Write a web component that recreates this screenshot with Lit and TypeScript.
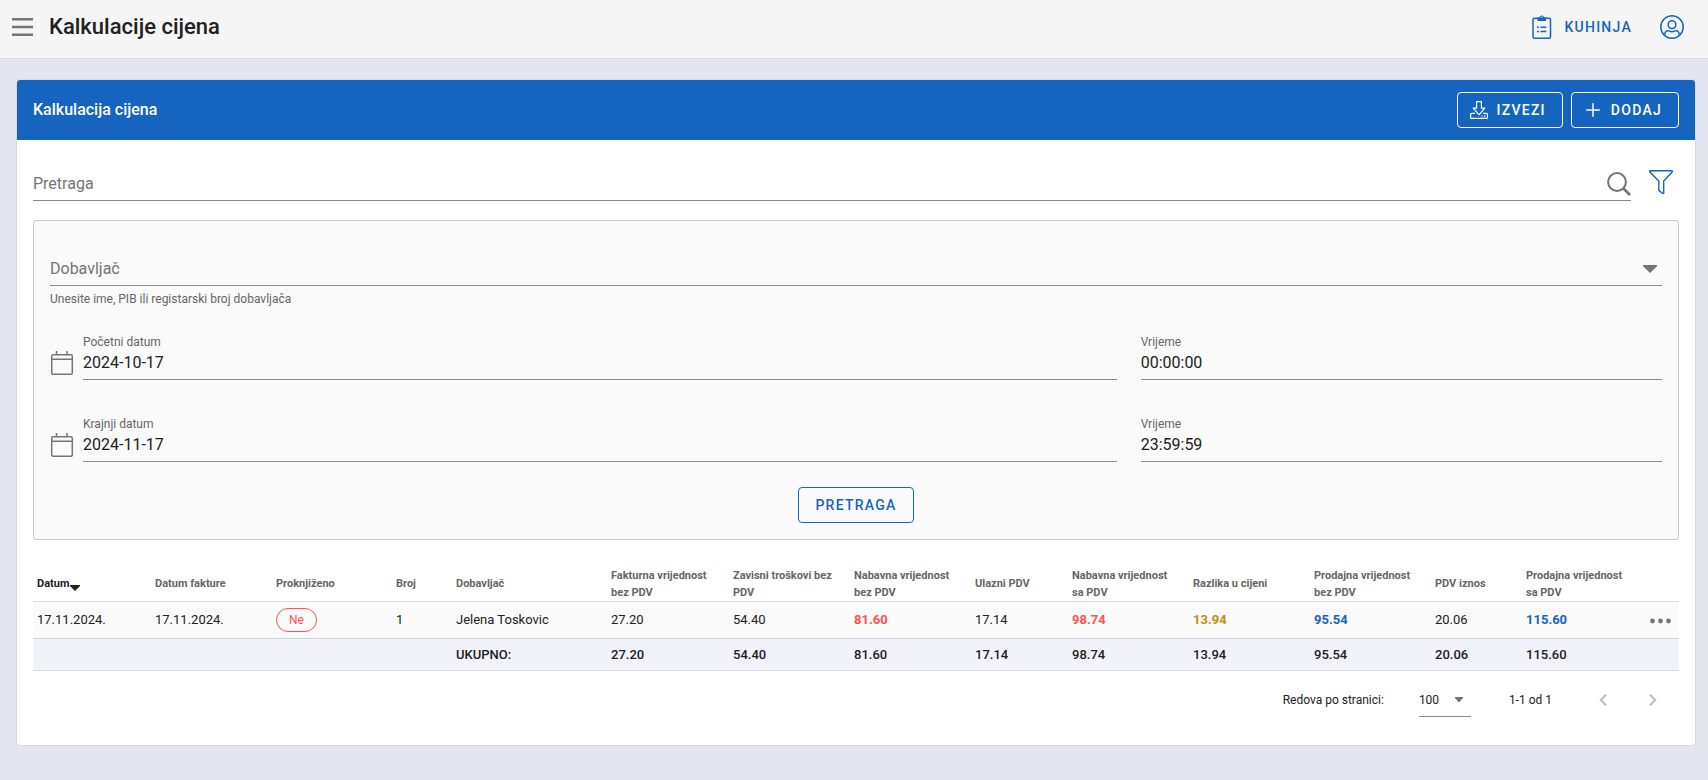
import { LitElement, html, css, svg, nothing } from "lit";
import { customElement, state } from "lit/decorators.js";

type Tone = "plain" | "cost" | "margin" | "sale";

interface Column {
  key: string;
  label: string;
  width: number;
  tone?: Tone;
}

const columns: Column[] = [
  { key: "date", label: "Datum", width: 118 },
  { key: "invoiceDate", label: "Datum fakture", width: 121 },
  { key: "posted", label: "Proknjiženo", width: 120 },
  { key: "number", label: "Broj", width: 60 },
  { key: "supplier", label: "Dobavljač", width: 155 },
  { key: "invoiceNet", label: "Fakturna vrijednost bez PDV", width: 122 },
  { key: "extraNet", label: "Zavisni troškovi bez PDV", width: 121 },
  { key: "costNet", label: "Nabavna vrijednost bez PDV", width: 121, tone: "cost" },
  { key: "inputVat", label: "Ulazni PDV", width: 97 },
  { key: "costGross", label: "Nabavna vrijednost sa PDV", width: 121, tone: "cost" },
  { key: "margin", label: "Razlika u cijeni", width: 121, tone: "margin" },
  { key: "saleNet", label: "Prodajna vrijednost bez PDV", width: 121, tone: "sale" },
  { key: "vat", label: "PDV iznos", width: 91 },
  { key: "saleGross", label: "Prodajna vrijednost sa PDV", width: 124, tone: "sale" },
  { key: "menu", label: "", width: 33 },
];

const totalWidth = columns.reduce((sum, c) => sum + c.width, 0);

const amounts = {
  invoiceNet: "27.20",
  extraNet: "54.40",
  costNet: "81.60",
  inputVat: "17.14",
  costGross: "98.74",
  margin: "13.94",
  saleNet: "95.54",
  vat: "20.06",
  saleGross: "115.60",
};

const rows: Record<string, string>[] = [
  { date: "17.11.2024.", invoiceDate: "17.11.2024.", posted: "Ne", number: "1", supplier: "Jelena Toskovic", ...amounts },
];

const totals: Record<string, string> = { supplier: "UKUPNO:", ...amounts };

const icon = (size: number, body: unknown, width = size) =>
  html`<svg class="icon" width=${width} height=${size} viewBox="0 0 ${width} ${size}" aria-hidden="true">${body}</svg>`;

const menuIcon = icon(18, svg`<path fill="currentColor" d="M0 0h21v2.500H0zM0 7.700h21v2.500H0zM0 15.400h21v2.500H0z"/>`, 21);

const clipboardIcon = icon(24, svg`
  <g fill="none" stroke="currentColor" stroke-width="1.500">
    <rect x="1" y="3.200" width="17.500" height="20" rx="1.500"/>
    <path d="M8.500 12.300h5.800M8.500 16.500h5.800"/>
  </g>
  <circle cx="5.900" cy="12.300" r="1" fill="currentColor"/>
  <circle cx="5.900" cy="16.500" r="1" fill="currentColor"/>
  <path fill="currentColor" fill-rule="evenodd" d="M5.300 2.500h2.100a2.400 2.400 0 0 1 4.700 0h2.100v2.300a1.200 1.200 0 0 1-1.200 1.200H6.500a1.200 1.200 0 0 1-1.200-1.200zM9.750 1.400a1.100 1.100 0 1 0 0 2.200 1.100 1.100 0 0 0 0-2.200z"/>`, 20);

const accountIcon = icon(24, svg`
  <g fill="none" stroke="currentColor" stroke-width="1.500">
    <circle cx="12" cy="12" r="11.200"/>
    <circle cx="12" cy="9.600" r="3.900"/>
    <path d="M4.800 20.400v-1.200a3.400 3.400 0 0 1 3.400-3.400c1.200 0 1.800.9 3.800.9s2.600-.9 3.800-.9a3.400 3.400 0 0 1 3.400 3.400v1.200"/>
  </g>`);

const exportIcon = icon(18, svg`
  <g fill="none" stroke="currentColor" stroke-width="1.200" stroke-linejoin="round">
    <path d="M6.600.6h4.800v6.600h3.400L9 13.800 3.200 7.200h3.400z"/>
    <path d="M5 12.400H1.600a1 1 0 0 0-1 1v3a1 1 0 0 0 1 1h14.800a1 1 0 0 0 1-1v-3a1 1 0 0 0-1-1H13"/>
    <path d="M11.500 15.100h1.200M14 15.100h1.500"/>
  </g>`);

const plusIcon = icon(18, svg`<path fill="none" stroke="currentColor" stroke-width="1.500" d="M9 2.300v13.400M2.300 9h13.400"/>`);

const searchIcon = icon(24, svg`
  <g fill="none" stroke="currentColor">
    <circle cx="10" cy="10" r="8.900" stroke-width="2"/>
    <path stroke-width="2.600" d="m16.500 16.500 6.500 6.500"/>
  </g>`);

const filterIcon = icon(24, svg`
  <path fill="none" stroke="currentColor" stroke-width="1.400" stroke-linejoin="round" d="M.8.8h22.400v1.100l-8.500 9v12.300h-1.300l-3.600-2.800v-9.500l-9-9z"/>`);

const calendarIcon = icon(24, svg`
  <g fill="none" stroke="currentColor" stroke-width="1.500">
    <rect x="1.700" y="3.700" width="20.600" height="19.600" rx="1.500"/>
    <path d="M1.700 8.300h20.600M6.500 0v3.700M17 0v3.700"/>
  </g>`);

const caretIcon = icon(8, svg`<path fill="currentColor" d="M0 0h14v1.200L7 8 0 1.200z"/>`, 14);

const smallCaretIcon = icon(6, svg`<path fill="currentColor" d="M0 0h8v1L4 5.500 0 1z"/>`, 8);

const sortIcon = icon(6, svg`<path fill="currentColor" d="M0 0h10v1L5 6 0 1z"/>`, 10);

const previousIcon = icon(12, svg`<path fill="none" stroke="currentColor" stroke-width="2" d="M7 .7 1.700 6 7 11.300"/>`, 8);

const nextIcon = icon(12, svg`<path fill="none" stroke="currentColor" stroke-width="2" d="M1 .7 6.300 6 1 11.300"/>`, 8);

const dotsIcon = icon(6, svg`
  <g fill="currentColor"><circle cx="2.500" cy="3" r="2.400"/><circle cx="10.500" cy="3" r="2.400"/><circle cx="18.500" cy="3" r="2.400"/></g>`, 21);

@customElement("app-root")
export class AppRoot extends LitElement {
  @state() private filtersOpen = true;

  static styles = css`
    :host {
      display: block;
      min-height: 100vh;
      background: #e3e6ee;
      color: #212121;
      font-family: Roboto, "Liberation Sans", sans-serif;
      font-size: 16px;
      line-height: 24px;
    }
    * {
      box-sizing: border-box;
    }
    .icon {
      display: block;
      flex: none;
    }
    button,
    input,
    select {
      margin: 0;
      padding: 0;
      border: 0;
      border-radius: 0;
      background: none;
      color: inherit;
      font: inherit;
      outline: none;
      appearance: none;
    }
    button {
      cursor: pointer;
    }
    h1,
    h2 {
      margin: 0;
      font-weight: 500;
    }
    .topbar {
      display: flex;
      align-items: center;
      height: 59px;
      padding: 0 24px 4px 12px;
      border-bottom: 1px solid #d6d8e4;
      background: #f5f5f5;
    }
    .topbar h1 {
      flex: 1;
      margin-left: 16px;
      font-size: 22px;
    }
    .muted {
      color: #757575;
    }
    .link {
      display: flex;
      align-items: center;
      gap: 12px;
      margin-right: 28px;
      color: #1565c0;
      text-decoration: none;
    }
    .caps {
      font-size: 14px;
      font-weight: 500;
      letter-spacing: 0.09em;
      text-transform: uppercase;
    }
    .blue {
      color: #1565c0;
    }
    .card {
      margin: 20px 12px 0 16px;
      border: 1px solid #d6d8e4;
      border-radius: 4px;
      background: #fff;
      overflow: hidden;
    }
    .card-head {
      display: flex;
      align-items: center;
      gap: 8px;
      height: 60px;
      padding: 0 16px;
      background: #1565c0;
      color: #fff;
    }
    .card-head h2 {
      flex: 1;
      font-size: 16px;
    }
    .button {
      display: flex;
      align-items: center;
      gap: 9px;
      height: 36px;
      padding: 0 16px 0 12px;
      border: 1px solid currentColor;
      border-radius: 4px;
    }
    .card-body {
      padding: 28px 16px 16px;
    }
    .search {
      display: flex;
      align-items: flex-start;
      gap: 18px;
      padding-right: 6px;
    }
    .filter-toggle {
      padding: 2px 0;
    }
    .line {
      display: flex;
      align-items: center;
      border-bottom: 1px solid #8d8d8d;
    }
    .line input,
    .line select {
      flex: 1;
      min-width: 0;
      width: 100%;
    }
    .line input::placeholder {
      color: #757575;
      opacity: 1;
    }
    .search .line {
      flex: 1;
      height: 33px;
    }
    .filters {
      margin-top: 19px;
      padding: 32px 16px 16px;
      border: 1px solid #c9c9c9;
      border-radius: 3px;
      background: #fafafa;
    }
    .supplier {
      height: 33px;
      padding-right: 5px;
    }
    .hint {
      margin-top: 4px;
      font-size: 12px;
      line-height: 18px;
      color: #666;
    }
    .period {
      display: grid;
      grid-template-columns: repeat(12, 1fr);
      gap: 24px;
      margin-top: 26px;
    }
    .period + .period {
      margin-top: 36px;
    }
    .date {
      grid-column: span 8;
      display: flex;
      align-items: center;
      gap: 9px;
    }
    .time {
      grid-column: span 4;
    }
    .date .icon {
      margin-top: 12px;
    }
    .field {
      flex: 1;
      min-width: 0;
    }
    .field label {
      display: block;
      font-size: 12px;
      line-height: 16px;
      color: #666;
    }
    .field .line {
      height: 30px;
      padding-bottom: 3px;
    }
    .submit {
      margin: 25px auto 0;
      padding: 0 16px;
    }
    table {
      width: 100%;
      margin-top: 26px;
      border-collapse: separate;
      border-spacing: 0;
      table-layout: fixed;
      font-size: 13px;
      text-align: left;
    }
    th,
    td {
      padding: 0 4px;
      border-bottom: 1px solid #dcdcdf;
    }
    th {
      height: 36px;
      padding-right: 12px;
      color: #666;
      font-size: 11px;
      font-weight: 700;
      line-height: 17px;
    }
    .sort {
      display: flex;
      align-items: center;
      gap: 1px;
      color: #212121;
    }
    .sort .icon {
      margin-top: 8px;
    }
    tbody td {
      height: 37px;
      border-bottom-color: #d0d0d6;
      background: #fafafa;
    }
    tfoot td {
      height: 32px;
      background: #f2f2fb;
      font-weight: 500;
    }
    .cost,
    .margin,
    .sale {
      font-weight: 700;
    }
    .cost {
      color: #ff5252;
    }
    .margin {
      color: #c09010;
    }
    .sale {
      color: #1565c0;
    }
    .chip {
      display: inline-block;
      padding: 0 12px;
      border: 1px solid #ff5252;
      border-radius: 12px;
      color: #ff5252;
      font-size: 12px;
      line-height: 22px;
    }
    .pager {
      display: flex;
      align-items: center;
      justify-content: flex-end;
      height: 58px;
      padding-right: 22px;
      font-size: 12px;
    }
    .page-size {
      width: 52px;
      height: 34px;
      margin: 0 38px 0 35px;
      padding-right: 8px;
    }
    .pages {
      display: flex;
      gap: 42px;
      margin-left: 47px;
      color: #bdbdbd;
    }
  `;

  private periodRow(id: string, label: string, date: string, time: string) {
    return html`
      <div class="period">
        <div class="date">
          <span class="muted">${calendarIcon}</span>
          <div class="field">
            <label for="${id}-date">${label}</label>
            <div class="line"><input id="${id}-date" type="text" .value=${date} /></div>
          </div>
        </div>
        <div class="field time">
          <label for="${id}-time">Vrijeme</label>
          <div class="line"><input id="${id}-time" type="text" .value=${time} /></div>
        </div>
      </div>
    `;
  }

  private cell(column: Column, row: Record<string, string>) {
    if (column.key === "menu") {
      return html`<td><button class="muted" aria-label="Opcije">${dotsIcon}</button></td>`;
    }
    if (column.key === "posted") {
      return html`<td><span class="chip">${row.posted}</span></td>`;
    }
    return html`<td class=${column.tone ?? "plain"}>${row[column.key]}</td>`;
  }

  private filters() {
    return html`
      <form class="filters" @submit=${(e: Event) => e.preventDefault()}>
        <div class="line supplier muted">
          <select aria-label="Dobavljač" aria-describedby="supplier-hint">
            <option value="">Dobavljač</option>
          </select>
          ${caretIcon}
        </div>
        <div class="hint" id="supplier-hint">Unesite ime, PIB ili registarski broj dobavljača</div>
        ${this.periodRow("start", "Početni datum", "2024-10-17", "00:00:00")}
        ${this.periodRow("end", "Krajnji datum", "2024-11-17", "23:59:59")}
        <button class="button submit caps blue" type="submit">Pretraga</button>
      </form>
    `;
  }

  render() {
    return html`
      <header class="topbar">
        <button class="muted" aria-label="Meni">${menuIcon}</button>
        <h1>Kalkulacije cijena</h1>
        <a class="link caps" href="#kuhinja">${clipboardIcon}<span>Kuhinja</span></a>
        <button class="blue" aria-label="Nalog">${accountIcon}</button>
      </header>
      <main class="card">
        <div class="card-head">
          <h2>Kalkulacija cijena</h2>
          <button class="button caps">${exportIcon}<span>Izvezi</span></button>
          <button class="button caps">${plusIcon}<span>Dodaj</span></button>
        </div>
        <div class="card-body">
          <div class="search">
            <div class="line">
              <input type="search" placeholder="Pretraga" aria-label="Pretraga" />
              <span class="muted">${searchIcon}</span>
            </div>
            <button
              class="filter-toggle blue"
              aria-label="Filteri"
              @click=${() => (this.filtersOpen = !this.filtersOpen)}
            >
              ${filterIcon}
            </button>
          </div>
          ${this.filtersOpen ? this.filters() : nothing}
          <table>
            <colgroup>
              ${columns.map((c) => html`<col style="width:${(c.width / totalWidth) * 100}%" />`)}
            </colgroup>
            <thead>
              <tr>
                ${columns.map((c) =>
                  c.key === "date"
                    ? html`<th scope="col" aria-sort="descending"><button class="sort">${c.label}${sortIcon}</button></th>`
                    : html`<th scope="col">${c.label}</th>`
                )}
              </tr>
            </thead>
            <tbody>
              ${rows.map((row) => html`<tr>${columns.map((c) => this.cell(c, row))}</tr>`)}
            </tbody>
            <tfoot>
              <tr>
                ${columns.map((c) => html`<td>${totals[c.key] ?? ""}</td>`)}
              </tr>
            </tfoot>
          </table>
          <div class="pager">
            <label for="page-size">Redova po stranici:</label>
            <div class="line page-size">
              <select id="page-size">
                <option>100</option>
              </select>
              <span class="muted">${smallCaretIcon}</span>
            </div>
            <span>1-1 od 1</span>
            <div class="pages">
              <button aria-label="Prethodna" disabled>${previousIcon}</button>
              <button aria-label="Sljedeća" disabled>${nextIcon}</button>
            </div>
          </div>
        </div>
      </main>
    `;
  }
}
